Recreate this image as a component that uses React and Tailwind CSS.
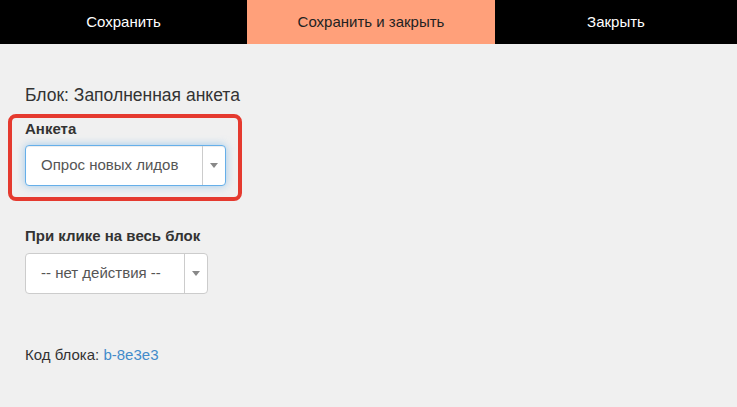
const font = { fontFamily: '"Liberation Sans", Arial, sans-serif' };

const Arrow = () => (
  <svg width="8" height="5" viewBox="0 0 8 5">
    <path d="M0 0 L8 0 L4 5 Z" fill="#888" />
  </svg>
);

const Select = ({ value, width, focused }) => (
  <div
    className={`flex h-[41px] rounded-[4px] bg-white border ${
      focused
        ? 'border-[#66afe9] shadow-[inset_0_1px_1px_rgba(0,0,0,0.075),0_0_8px_rgba(102,175,233,0.6)]'
        : 'border-[#ccc]'
    }`}
    style={{ width }}
  >
    <div className="flex-1 flex items-center pl-[15px] text-[15px] text-[#555]">
      {value}
    </div>
    <div className="w-[23px] border-l border-[#ccc] flex items-center justify-center">
      <Arrow />
    </div>
  </div>
);

export default function App() {
  return (
    <div className="w-[737px] h-[407px] bg-[#f0f0f0] overflow-hidden" style={font}>
      {/* header */}
      <div className="grid grid-cols-[247px_248px_1fr] h-[44px] text-[15px]">
        <div className="bg-black text-white flex items-center justify-center">
          Сохранить
        </div>
        <div className="bg-[#ffa07a] text-[#222] flex items-center justify-center">
          Сохранить и закрыть
        </div>
        <div className="bg-black text-white flex items-center justify-center">
          Закрыть
        </div>
      </div>

      <div className="pl-[8px] pt-[39px]">
        <div className="pl-[17px] text-[17.5px] leading-[24px] text-[#333]">
          Блок: Заполненная анкета
        </div>

        {/* highlighted field */}
        <div className="mt-[7px] w-[234px] border-4 border-[#e53a2f] rounded-[8px] pl-[13px] pt-[1px] pb-[11px]">
          <div className="text-[15px] leading-[20px] font-bold text-[#333] mb-[6px]">
            Анкета
          </div>
          <Select value="Опрос новых лидов" width={201} focused />
        </div>

        <div className="pl-[17px] mt-[25px]">
          <div className="text-[15px] leading-[20px] font-bold text-[#333] mb-[7px]">
            При клике на весь блок
          </div>
          <Select value="-- нет действия --" width={183} />

          <div className="mt-[51px] text-[15px] leading-[20px] text-[#333]">
            Код блока: <a className="text-[#428bca]">b-8e3e3</a>
          </div>
        </div>
      </div>
    </div>
  );
}
